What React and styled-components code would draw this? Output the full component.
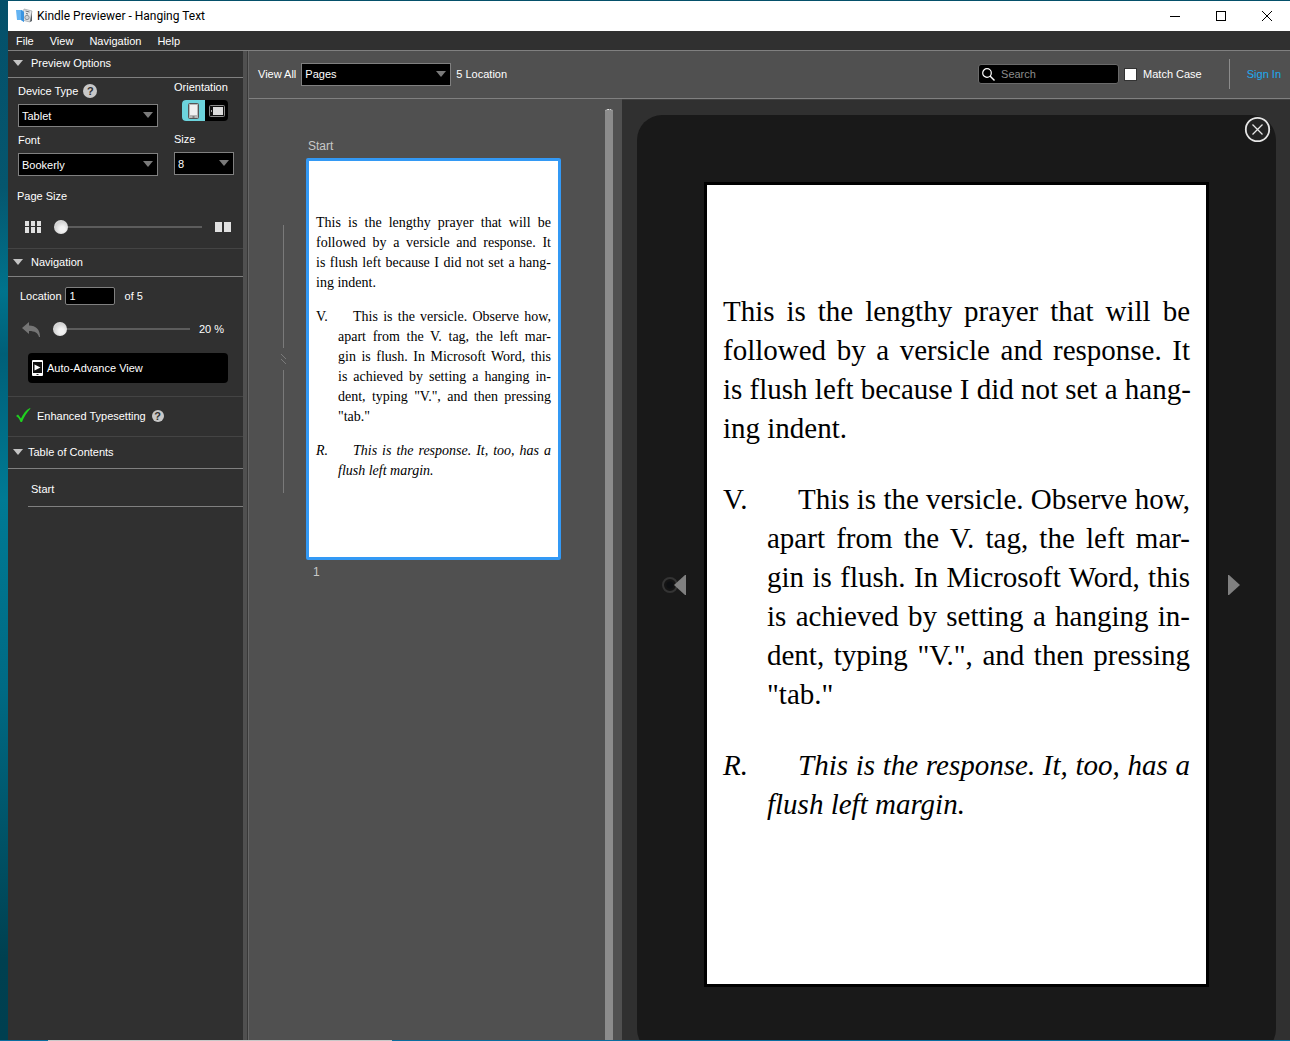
import { useState } from "react";
import styled, { createGlobalStyle, css } from "styled-components";

const colors = {
    panel: "#303030",
    surface: "#505050",
    device: "#191919",
    line: "#808080",
    softLine: "#444444",
    text: "#ffffff",
    muted: "#8c8c8c",
    accent: "#3399f5",
    link: "#1eaaf1",
};

const GlobalStyle = createGlobalStyle`
    * {
        box-sizing: border-box;
    }

    body {
        margin: 0;
        background: ${colors.panel};
        color: ${colors.text};
        font: 11px/16px "Liberation Sans", Arial, sans-serif;
    }

    button, input, select {
        font: inherit;
        color: inherit;
    }

    button {
        padding: 0;
        border: 0;
        background: none;
    }

    svg {
        display: block;
        flex: none;
    }
`;

/* ---------- frame ---------- */

const Desktop = styled.div`
    display: grid;
    grid-template-rows: minmax(0, 1fr) 1px;
    height: 100vh;
    padding: 1px 0 0 8px;
    background: linear-gradient(#04506a, #05566e 18%, #00738c 28%, #005f78 34%, #007a94 48%, #006a84 66%, #004050 92%, #003f50);
`;

const AppWindow = styled.div`
    display: flex;
    flex-direction: column;
    min-height: 0;
    background: ${colors.panel};
`;

const Taskbar = styled.div`
    margin-left: -8px;
    background: linear-gradient(90deg, #0a6ea0 48px, #c8c8c8 48px, #c8c8c8 392px, #0a6ea0 392px);
`;

const TitleBar = styled.header`
    display: flex;
    align-items: center;
    height: 30px;
    padding-left: 8px;
    background: #ffffff;
    color: #000000;
`;

const Title = styled.h1`
    flex: 1;
    margin: 0 0 0 4px;
    font: 12px/16px Roboto, "Open Sans", sans-serif;
`;

const WindowButton = styled.button`
    display: grid;
    place-items: center;
    width: 46px;
    height: 30px;
`;

const MenuBar = styled.nav`
    display: flex;
    align-items: center;
    gap: 16px;
    height: 20px;
    padding-left: 8px;
    border-bottom: 1px solid ${colors.line};
`;

const Body = styled.div`
    display: grid;
    grid-template-columns: 235px 6px minmax(0, 1fr);
    flex: 1;
    min-height: 0;
`;

const Splitter = styled.div`
    border-right: 1px solid #666666;
    background: linear-gradient(90deg, ${colors.surface} 4px, #383838 4px);
`;

/* ---------- shared controls ---------- */

const SelectWrap = styled.div`
    position: relative;
    width: ${({ $width }) => $width}px;

    svg {
        position: absolute;
        top: 8px;
        right: 5px;
        pointer-events: none;
    }
`;

const StyledSelect = styled.select`
    display: block;
    width: 100%;
    height: 23px;
    padding: 0 16px 0 3px;
    border: 1px solid ${colors.line};
    border-radius: 0;
    background: #000000;
    appearance: none;
`;

const Range = styled.input`
    flex: ${({ $width }) => `0 0 ${$width}px`};
    width: ${({ $width }) => $width}px;
    height: 16px;
    margin: 0;
    background: linear-gradient(#5c5c5c, #5c5c5c) center / 100% 2px no-repeat;
    appearance: none;

    &::-webkit-slider-thumb {
        width: 14px;
        height: 14px;
        border-radius: 50%;
        background: radial-gradient(circle at 60% 65%, #f2f2f2 20%, #d2d2d2 60%, #e6e6e6);
        appearance: none;
    }
`;

const HelpButton = styled.button`
    width: ${({ $size }) => $size}px;
    height: ${({ $size }) => $size}px;
    border-radius: 50%;
    background: #c8c8c8;
    color: ${colors.panel};
    font-weight: bold;
    line-height: ${({ $size }) => $size}px;
`;

/* ---------- sidebar ---------- */

const Sidebar = styled.aside`
    background: ${colors.panel};
`;

const SectionHeader = styled.button`
    display: flex;
    align-items: center;
    gap: ${({ $gap }) => $gap}px;
    width: 100%;
    height: ${({ $height }) => $height}px;
    padding: 0 0 2px 5px;
    border-bottom: 1px solid ${colors.line};
    text-align: left;
`;

const OptionColumns = styled.div`
    display: grid;
    grid-template-columns: 140px 60px;
    gap: 16px;
    padding-left: 10px;
`;

const OptionColumn = styled.div`
    display: flex;
    flex-direction: column;
    gap: ${({ $gap }) => $gap}px;
    padding-top: ${({ $top }) => $top}px;
`;

const Field = styled.div`
    display: flex;
    flex-direction: column;
    gap: 5px;
`;

const LabelRow = styled.div`
    display: flex;
    align-items: center;
    gap: 5px;
    height: 16px;
`;

const Orientation = styled.div`
    display: flex;
    width: 46px;
    height: 21px;
    margin-left: 8px;
    border-radius: 4px;
    background: #000000;
    overflow: hidden;
`;

const OrientationButton = styled.button`
    display: grid;
    place-items: center;
    flex: 1;
    ${({ $active }) => $active && css`
        background: #6cd3dc;
    `}
`;

const PageSize = styled.div`
    padding: 12px 0 13px 9px;
    border-bottom: 1px solid ${colors.softLine};
`;

const PageSizeRow = styled.div`
    display: flex;
    align-items: center;
    gap: 13px;
    margin-top: 15px;
    padding-left: 8px;
`;

const NavigationPanel = styled.div`
    padding: 10px 15px 13px 12px;
    border-bottom: 1px solid ${colors.softLine};
`;

const LocationRow = styled.div`
    display: flex;
    align-items: center;
    height: 18px;
`;

const LocationInput = styled.input`
    width: 50px;
    height: 18px;
    margin: 0 10px 0 3px;
    padding: 0 4px;
    border: 1px solid ${colors.line};
    border-radius: 2px;
    background: #000000;
`;

const ProgressRow = styled.div`
    display: flex;
    align-items: center;
    gap: 9px;
    height: 48px;
    padding-left: 2px;

    button {
        margin-right: 4px;
    }
`;

const AdvanceButton = styled.button`
    display: flex;
    align-items: center;
    gap: 4px;
    width: 200px;
    height: 30px;
    margin-left: 8px;
    padding-left: 4px;
    border-radius: 4px;
    background: #000000;
`;

const Typesetting = styled.div`
    display: flex;
    align-items: center;
    gap: 6px;
    height: 40px;
    padding: 0 0 2px 8px;
    border-bottom: 1px solid ${colors.softLine};
`;

const TocList = styled.ul`
    margin: 0 0 0 20px;
    padding: 0;
    list-style: none;

    li {
        padding: 12px 3px 9px;
        border-bottom: 1px solid ${colors.line};
    }
`;

const PlainLink = styled.a`
    color: ${({ $color }) => $color || "inherit"};
    text-decoration: none;
`;

/* ---------- main area ---------- */

const Main = styled.main`
    display: flex;
    flex-direction: column;
    min-height: 0;
    background: ${colors.surface};
`;

const Toolbar = styled.div`
    display: flex;
    align-items: center;
    gap: 5px;
    height: 48px;
    padding: 0 9px 1px;
    border-bottom: 1px solid ${colors.line};
`;

const SearchBox = styled.label`
    display: flex;
    align-items: center;
    gap: 6px;
    width: 141px;
    height: 20px;
    margin-left: auto;
    padding-left: 3px;
    border: 1px solid #6a6a6a;
    border-radius: 3px;
    background: #000000;

    input {
        width: 100%;
        min-width: 0;
        padding: 0;
        border: 0;
        outline: 0;
        background: transparent;
    }

    input::placeholder {
        color: ${colors.muted};
        opacity: 1;
    }
`;

const MatchCase = styled.label`
    display: flex;
    align-items: center;
    gap: 6px;

    input {
        width: 13px;
        height: 13px;
        margin: 0;
        border: 1px solid #333333;
        background: #ffffff;
        appearance: none;
    }

    input:checked {
        background: ${colors.accent};
    }
`;

const Account = styled.div`
    display: flex;
    align-items: center;
    height: 30px;
    margin-left: 22px;
    padding-left: 17px;
    border-left: 1px solid ${colors.muted};
`;

const Workspace = styled.div`
    display: grid;
    grid-template-columns: 373px minmax(0, 1fr);
    flex: 1;
    min-height: 0;
`;

const PageList = styled.section`
    display: flex;
    justify-content: space-between;
    min-height: 0;
    padding: 10px 9px 0 29px;
    overflow: hidden;
`;

const PageGrid = styled.div`
    display: grid;
    grid-template-columns: 12px 255px;
    grid-template-rows: 16px 402px 16px;
    align-items: center;
    gap: 4px 16px;
    padding-top: 29px;
    color: #c8c8c8;
    font-size: 12px;
`;

const PageCaption = styled.div`
    grid-column: 2;
    padding-left: ${({ $indent }) => $indent}px;
`;

const Scrollbar = styled.div`
    width: 8px;
    border-top: 1px dotted #e6e6e6;
    border-radius: 3px 3px 0 0;
    background: ${colors.muted};
`;

const PreviewPane = styled.section`
    display: flex;
    padding: 15px 14px 0 15px;
    border-top: 1px solid #404040;
    background: ${colors.panel};
    overflow: hidden;
`;

const Device = styled.div`
    position: relative;
    flex: 1;
    margin-bottom: -14px;
    padding-top: 67px;
    border-radius: 25px;
    background: ${colors.device};
`;

const Stage = styled.div`
    display: flex;
    align-items: center;
    justify-content: center;
    gap: 18px;
`;

const CloseButton = styled.button`
    position: absolute;
    top: 1px;
    right: 5px;
`;

/* ---------- book page ---------- */

const pageSizes = {
    thumb: { width: 255, height: 402, top: 52, side: 7, font: 14, line: 20, gap: 14, indent: 22, tag: 37, border: colors.accent },
    full: { width: 505, height: 805, top: 107, side: 16, font: 29, line: 39, gap: 32, indent: 44, tag: 75, border: "#000000" },
};

const Sheet = styled.article`
    width: ${({ $size }) => $size.width}px;
    height: ${({ $size }) => $size.height}px;
    padding: ${({ $size }) => `${$size.top}px ${$size.side}px 0`};
    border: 3px solid ${({ $size }) => $size.border};
    border-radius: ${({ $size }) => ($size === pageSizes.thumb ? 2 : 0)}px;
    background: #ffffff;
    color: #000000;
    font-family: "Liberation Serif", "Times New Roman", serif;
    font-size: ${({ $size }) => $size.font}px;
    line-height: ${({ $size }) => $size.line}px;
`;

const Paragraph = styled.p`
    margin: 0 0 ${({ $size }) => $size.gap}px;
    padding-left: ${({ $size, $hanging }) => ($hanging ? $size.indent : 0)}px;
    font-style: ${({ $italic }) => ($italic ? "italic" : "normal")};
`;

const Line = styled.span`
    display: block;
    text-align-last: justify;
    white-space: nowrap;

    &:last-child {
        text-align-last: left;
    }
`;

const Tag = styled.span`
    display: inline-block;
    width: ${({ $size }) => $size.tag}px;
    margin-left: ${({ $size }) => -$size.indent}px;
    text-align-last: left;
`;

const bookText = [
    {
        lines: [
            "This is the lengthy prayer that will be",
            "followed by a versicle and response. It",
            "is flush left because I did not set a hang-",
            "ing indent.",
        ],
    },
    {
        tag: "V.",
        lines: [
            "This is the versicle. Observe how,",
            "apart from the V. tag, the left mar-",
            "gin is flush. In Microsoft Word, this",
            "is achieved by setting a hanging in-",
            "dent, typing \"V.\", and then pressing",
            "\"tab.\"",
        ],
    },
    {
        tag: "R.",
        italic: true,
        lines: [
            "This is the response. It, too, has a",
            "flush left margin.",
        ],
    },
];

function BookPage({ size }) {
    return (
        <Sheet $size={size}>
            {bookText.map(({ tag, italic, lines }) => (
                <Paragraph key={lines[0]} $size={size} $hanging={!!tag} $italic={italic}>
                    {lines.map((line, i) => (
                        <Line key={line}>
                            {tag && i === 0 && <Tag $size={size}>{tag}</Tag>}
                            {line}
                        </Line>
                    ))}
                </Paragraph>
            ))}
        </Sheet>
    );
}

/* ---------- icons ---------- */

const Triangle = ({ fill = "#7a7a7a" }) => (
    <svg width="10" height="6" viewBox="0 0 10 6">
        <path d="M0 0h10L5 6z" fill={fill} />
    </svg>
);

const AppIcon = () => (
    <svg width="17" height="16" viewBox="0 0 17 16">
        <path d="M8 1l8 2-2 11-8-2z" fill="#e4e7ea" stroke="#8a9096" strokeWidth=".6" />
        <path d="M9.500 3l4 1M10 5.500l2 .5" stroke="#6b7278" />
        <circle cx="11" cy="9.500" r="2.200" fill="#cfd4d8" stroke="#7a8086" strokeWidth=".8" />
        <path d="M14 14l2-10v9z" fill="#555b60" />
        <path d="M0 2h6l2 2v10l-3-2H1z" fill="#63b3f2" />
        <path d="M5 2l3 2v10l-3-2z" fill="#3a94e0" />
    </svg>
);

const PortraitIcon = () => (
    <svg width="13" height="16" viewBox="0 0 13 16">
        <rect x="1.5" y=".5" width="10" height="15" rx="1" fill="#b7b7b7" stroke="#555" />
        <rect x="3" y="2" width="7" height="10" fill="#f0f0f0" />
        <path d="M5.500 14h2" stroke="#444" />
    </svg>
);

const LandscapeIcon = () => (
    <svg width="16" height="12" viewBox="0 0 16 12">
        <rect x=".5" y=".5" width="15" height="11" rx="1" fill="#111" stroke="#8c8c8c" />
        <rect x="4" y="2" width="10" height="8" fill="#dcdcdc" />
        <path d="M2.500 5v2" stroke="#aaa" />
    </svg>
);

const GridIcon = () => (
    <svg width="16" height="12" viewBox="0 0 16 12" fill="#e0e0e0">
        {[0, 6, 12].map((x) => (
            <g key={x}>
                <rect x={x} width="4" height="5" />
                <rect x={x} y="6" width="4" height="6" />
            </g>
        ))}
    </svg>
);

const SpreadIcon = () => (
    <svg width="16" height="10" viewBox="0 0 16 10" fill="#e0e0e0">
        <rect width="7" height="10" />
        <rect x="9" width="7" height="10" />
    </svg>
);

const BackIcon = () => (
    <svg width="18" height="15" viewBox="0 0 18 15">
        <path d="M0 6l7-6v3.500c7 0 11 4 11 11.500h-1c-1-4-4-6-10-6V12z" fill="#757575" />
    </svg>
);

const AdvanceIcon = () => (
    <svg width="11" height="16" viewBox="0 0 11 16">
        <rect width="11" height="16" rx="1" fill="#fff" />
        <rect x="1" y="2" width="9" height="11" fill="#111" />
        <path d="M2.500 4.500l6 3-6 3z" fill="#fff" />
        <path d="M4.500 14.500h2" stroke="#333" />
    </svg>
);

const CheckIcon = () => (
    <svg width="15" height="15" viewBox="0 0 15 15">
        <path d="M0 8l2-1.500 3 4C7 6 10 2 14 0l.5.5C11 4 8 9 6 14H4.500C3.500 11 2 9 0 8z" fill="#1fd01f" />
    </svg>
);

const SearchIcon = () => (
    <svg width="13" height="13" viewBox="0 0 13 13" fill="none" stroke="#fff">
        <circle cx="5" cy="5" r="4.300" strokeWidth="1.200" />
        <path d="M8 8l4.500 4.500" strokeWidth="1.400" />
    </svg>
);

const CloseIcon = () => (
    <svg width="27" height="27" viewBox="0 0 27 27" fill="none" stroke="#e6e6e6">
        <circle cx="13.500" cy="13.500" r="11.700" fill="#222" strokeWidth="1.800" />
        <path d="M8.500 8.500l10 10M18.500 8.500l-10 10" strokeWidth="1.300" />
    </svg>
);

const BreakMark = () => (
    <svg width="12" height="268" viewBox="0 0 12 268" fill="none" stroke="#7a7a7a">
        <path d="M5.500 0v123M5.500 145v123M3 129l5 5M3 134l5 5" />
    </svg>
);

const PrevIcon = () => (
    <svg width="25" height="20" viewBox="0 0 25 20">
        <circle cx="9" cy="10" r="7" fill="#141414" stroke="#343434" strokeWidth="2" />
        <circle cx="9" cy="10" r="3.500" fill="#0d0f12" />
        <path d="M25 0v20h-1L13 10 24 0z" fill="#808080" />
    </svg>
);

/* Same width as PrevIcon so the page stays centred. */
const NextIcon = () => (
    <svg width="25" height="20" viewBox="0 0 25 20">
        <path d="M1 0v20h1l11-10L2 0z" fill="#808080" />
    </svg>
);

/* ---------- app ---------- */

function Select({ id, width, options }) {
    return (
        <SelectWrap $width={width}>
            <StyledSelect id={id}>
                {options.map((option) => <option key={option}>{option}</option>)}
            </StyledSelect>
            <Triangle />
        </SelectWrap>
    );
}

function PreviewOptions() {
    const [landscape, setLandscape] = useState(false);

    return (
        <>
            <SectionHeader $height={27} $gap={8}>
                <Triangle fill="#c4c4c4" /> Preview Options
            </SectionHeader>
            <OptionColumns>
                <OptionColumn $gap={5} $top={5}>
                    <Field>
                        <LabelRow>
                            <label htmlFor="device">Device Type</label>
                            <HelpButton $size={14} aria-label="Device type help">?</HelpButton>
                        </LabelRow>
                        <Select id="device" width={140} options={["Tablet", "Phone", "Kindle E-reader"]} />
                    </Field>
                    <Field>
                        <label htmlFor="font">Font</label>
                        <Select id="font" width={140} options={["Bookerly", "Caecilia", "Georgia"]} />
                    </Field>
                </OptionColumn>
                <OptionColumn $gap={10} $top={1}>
                    <Field>
                        <span id="orientation">Orientation</span>
                        <Orientation role="group" aria-labelledby="orientation">
                            <OrientationButton $active={!landscape} aria-label="Portrait" onClick={() => setLandscape(false)}>
                                <PortraitIcon />
                            </OrientationButton>
                            <OrientationButton $active={landscape} aria-label="Landscape" onClick={() => setLandscape(true)}>
                                <LandscapeIcon />
                            </OrientationButton>
                        </Orientation>
                    </Field>
                    <Field>
                        <label htmlFor="size">Size</label>
                        <Select id="size" width={60} options={["8", "9", "10"]} />
                    </Field>
                </OptionColumn>
            </OptionColumns>
            <PageSize>
                <label htmlFor="page-size">Page Size</label>
                <PageSizeRow>
                    <GridIcon />
                    <Range id="page-size" type="range" $width={148} defaultValue={0} />
                    <SpreadIcon />
                </PageSizeRow>
            </PageSize>
        </>
    );
}

function NavigationOptions() {
    return (
        <>
            <SectionHeader $height={28} $gap={8}>
                <Triangle fill="#c4c4c4" /> Navigation
            </SectionHeader>
            <NavigationPanel>
                <LocationRow>
                    <label htmlFor="location">Location</label>
                    <LocationInput id="location" defaultValue="1" />
                    of 5
                </LocationRow>
                <ProgressRow>
                    <button aria-label="Go back"><BackIcon /></button>
                    <Range type="range" aria-label="Progress" $width={137} defaultValue={0} />
                    <span>20 %</span>
                </ProgressRow>
                <AdvanceButton><AdvanceIcon /> Auto-Advance View</AdvanceButton>
            </NavigationPanel>
        </>
    );
}

function App() {
    return (
        <Desktop>
            <GlobalStyle />
            <AppWindow>
                <TitleBar>
                    <AppIcon />
                    <Title>Kindle Previewer - Hanging Text</Title>
                    <WindowButton aria-label="Minimize">
                        <svg width="10" height="10"><path d="M0 5.500h10" stroke="#000" /></svg>
                    </WindowButton>
                    <WindowButton aria-label="Maximize">
                        <svg width="10" height="10"><rect x=".5" y=".5" width="9" height="9" fill="none" stroke="#000" /></svg>
                    </WindowButton>
                    <WindowButton aria-label="Close">
                        <svg width="10" height="10"><path d="M0 0l10 10M10 0L0 10" stroke="#000" /></svg>
                    </WindowButton>
                </TitleBar>
                <MenuBar>
                    {["File", "View", "Navigation", "Help"].map((item) => <button key={item}>{item}</button>)}
                </MenuBar>
                <Body>
                    <Sidebar>
                        <PreviewOptions />
                        <NavigationOptions />
                        <Typesetting>
                            <CheckIcon />
                            <span>Enhanced Typesetting</span>
                            <HelpButton $size={12} aria-label="Enhanced typesetting help">?</HelpButton>
                        </Typesetting>
                        <SectionHeader $height={32} $gap={5}>
                            <Triangle fill="#c4c4c4" /> Table of Contents
                        </SectionHeader>
                        <TocList>
                            <li><PlainLink href="#start">Start</PlainLink></li>
                        </TocList>
                    </Sidebar>
                    <Splitter />
                    <Main>
                        <Toolbar>
                            <label htmlFor="view-all">View All</label>
                            <Select id="view-all" width={150} options={["Pages", "Images", "Tables"]} />
                            <span>5 Location</span>
                            <SearchBox>
                                <SearchIcon />
                                <input type="text" placeholder="Search" aria-label="Search" />
                            </SearchBox>
                            <MatchCase><input type="checkbox" /> Match Case</MatchCase>
                            <Account><PlainLink href="#sign-in" $color={colors.link}>Sign In</PlainLink></Account>
                        </Toolbar>
                        <Workspace>
                            <PageList>
                                <PageGrid>
                                    <PageCaption $indent={2}>Start</PageCaption>
                                    <BreakMark />
                                    <BookPage size={pageSizes.thumb} />
                                    <PageCaption $indent={7}>1</PageCaption>
                                </PageGrid>
                                <Scrollbar />
                            </PageList>
                            <PreviewPane>
                                <Device>
                                    <Stage>
                                        <button aria-label="Previous page"><PrevIcon /></button>
                                        <BookPage size={pageSizes.full} />
                                        <button aria-label="Next page"><NextIcon /></button>
                                    </Stage>
                                    <CloseButton aria-label="Close preview"><CloseIcon /></CloseButton>
                                </Device>
                            </PreviewPane>
                        </Workspace>
                    </Main>
                </Body>
            </AppWindow>
            <Taskbar />
        </Desktop>
    );
}

export default App;
